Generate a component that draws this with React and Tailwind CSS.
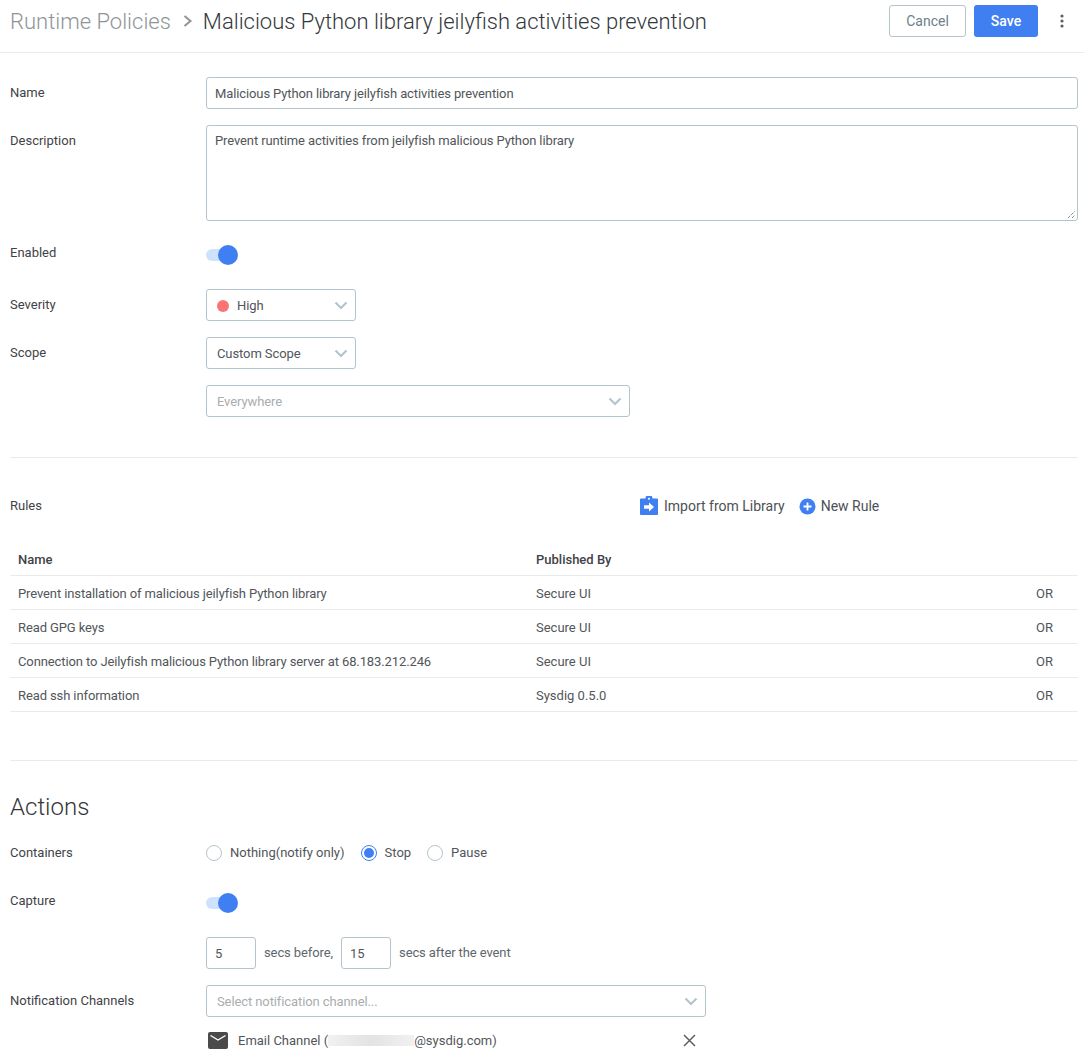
const rules = [
  { name: 'Prevent installation of malicious jeilyfish Python library', by: 'Secure UI' },
  { name: 'Read GPG keys', by: 'Secure UI' },
  { name: 'Connection to Jeilyfish malicious Python library server at 68.183.212.246', by: 'Secure UI' },
  { name: 'Read ssh information', by: 'Sysdig 0.5.0' },
];

function Row({ label, children }) {
  return (
    <div className="flex">
      <div className="w-[196px] shrink-0 pt-2 text-[13px] leading-[16px] text-[#3f4347]">{label}</div>
      <div className="min-w-0 flex-1">{children}</div>
    </div>
  );
}

function Toggle() {
  return (
    <div className="flex h-9 items-center">
      <div className="relative h-3 w-8">
        <div className="h-3 w-[26px] rounded-full bg-[#cfe2fd]" />
        <div className="absolute right-0 top-[-4px] h-5 w-5 rounded-full bg-[#3f7ff2]" />
      </div>
    </div>
  );
}

function Chevron() {
  return (
    <svg width="14" height="9" viewBox="0 0 14 9" fill="none" stroke="#b5c4cc" strokeWidth="2.2">
      <path d="M1.5 1.5 L7 7 L12.5 1.5" />
    </svg>
  );
}

function Select({ children, className = '', placeholder }) {
  return (
    <div className={`flex h-8 items-center justify-between rounded-[3px] border border-[#b5c4cc] pl-[10px] pr-[7px] text-[13px] tracking-[-0.1px] ${placeholder ? 'text-[#a9adb0]' : 'text-[#52565a]'} ${className}`}>
      <div className="flex items-center pt-px">{children}</div>
      <Chevron />
    </div>
  );
}

function Radio({ checked, label }) {
  return (
    <div className="flex items-center">
      {checked ? (
        <div className="flex h-4 w-4 items-center justify-center rounded-full border border-[#3f7ff2]">
          <div className="h-[10px] w-[10px] rounded-full bg-[#3f7ff2]" />
        </div>
      ) : (
        <div className="h-4 w-4 rounded-full border border-[#b5c4cc]" />
      )}
      <span className="ml-2 text-[13px] text-[#52565a]">{label}</span>
    </div>
  );
}

export default function App() {
  return (
    <div className="h-[1058px] overflow-hidden bg-white font-['Roboto',sans-serif]">
      {/* Header */}
      <div className="flex h-[53px] items-start justify-between border-b border-[#e8eaeb] pl-[10px] pr-5">
        <div className="flex h-[42px] items-center text-[22px] font-light">
          <span className="text-[#8f9498]">Runtime Policies</span>
          <svg width="10" height="14" viewBox="0 0 10 14" className="ml-[12px] mr-[10px]" fill="none" stroke="#8f9498" strokeWidth="2">
            <path d="M1.5 2 L7.5 7 L1.5 12" />
          </svg>
          <span className="text-[#33373b]">Malicious Python library jeilyfish activities prevention</span>
        </div>
        <div className="flex items-center pt-[5px]">
          <button className="h-8 w-[77px] rounded-[3px] border border-[#b5c4cc] bg-white pt-px text-[14px] text-[#6c7f8a]">Cancel</button>
          <button className="ml-2 h-8 w-[64px] rounded-[3px] bg-[#3f7ff2] pt-px text-[14px] font-medium text-white">Save</button>
          <svg width="4" height="14" viewBox="0 0 4 14" className="ml-[22px]" fill="#5b6063">
            <circle cx="2" cy="2" r="1.6" />
            <circle cx="2" cy="7" r="1.6" />
            <circle cx="2" cy="12" r="1.6" />
          </svg>
        </div>
      </div>

      {/* Main form */}
      <div className="pl-[10px] pr-[6px]">
        <div className="flex flex-col gap-4 pt-6">
          <Row label="Name">
            <div className="flex h-8 items-center rounded-[3px] border border-[#b5c4cc] px-2 pt-px text-[13px] tracking-[-0.11px] text-[#52565a]">
              Malicious Python library jeilyfish activities prevention
            </div>
          </Row>
          <Row label="Description">
            <div className="relative h-24 rounded-[3px] border border-[#b5c4cc] px-2 pt-[7px] text-[13px] leading-[16px] tracking-[-0.11px] text-[#52565a]">
              Prevent runtime activities from jeilyfish malicious Python library
              <svg width="9" height="9" viewBox="0 0 9 9" className="absolute bottom-[1px] right-[1px]" stroke="#555" strokeWidth="1" strokeDasharray="1 1">
                <path d="M1 8 L8 1 M5 8 L8 5" />
              </svg>
            </div>
          </Row>
          <Row label="Enabled">
            <Toggle />
          </Row>
          <Row label="Severity">
            <Select className="w-[150px]">
              <span className="mr-2 h-3 w-3 rounded-full bg-[#fb7474]" />
              High
            </Select>
          </Row>
          <Row label="Scope">
            <div className="flex flex-col gap-4">
              <Select className="w-[150px]">Custom Scope</Select>
              <Select className="w-[424px]" placeholder>Everywhere</Select>
            </div>
          </Row>
        </div>

        <div className="mt-10 border-t border-[#e8eaeb]" />

        {/* Rules */}
        <div className="mt-8 flex h-8 items-center text-[13px] text-[#3f4347]">
          <div className="w-[629px]">Rules</div>
          <div className="flex items-center text-[14px] text-[#4d5155]">
            <svg width="20" height="20" viewBox="0 0 20 20" className="mr-[5px]">
              <path d="M2 2.5h4.5a3.5 3.5 0 0 1 7 0H18a1 1 0 0 1 1 1V18a1 1 0 0 1-1 1H2a1 1 0 0 1-1-1V3.5a1 1 0 0 1 1-1z" fill="#3f7ff2" />
              <circle cx="10" cy="2.8" r="1" fill="#fff" />
              <path d="M5 9.2h5V6.5l5 4.5-5 4.5v-2.7H5z" fill="#fff" />
            </svg>
            Import from Library
            <svg width="17" height="17" viewBox="0 0 17 17" className="ml-[14px] mr-[5px]">
              <circle cx="8.5" cy="8.5" r="8" fill="#3f7ff2" />
              <path d="M4.5 8.5h8M8.5 4.5v8" stroke="#fff" strokeWidth="1.8" />
            </svg>
            New Rule
          </div>
        </div>

        <div className="mt-[21px]">
          <div className="flex h-[33px] items-center border-b border-[#e8eaeb] pl-2 pt-px text-[13px] font-medium text-[#3f4347]">
            <div className="w-[518px]">Name</div>
            <div>Published By</div>
          </div>
          {rules.map((rule) => (
            <div key={rule.name} className="flex h-[34px] items-center border-b border-[#e8eaeb] pl-2 pt-[2px] text-[13px] text-[#52565a]">
              <div className="w-[518px] tracking-[-0.11px]">{rule.name}</div>
              <div className="flex-1">{rule.by}</div>
              <div className="w-[42px]">OR</div>
            </div>
          ))}
        </div>

        <div className="mt-[48px] border-t border-[#e8eaeb]" />

        {/* Actions */}
        <h2 className="mt-[29px] text-[24px] font-light leading-[34px] text-[#33373b]">Actions</h2>

        <div className="mt-[13px] flex flex-col gap-4">
          <Row label="Containers">
            <div className="flex h-8 items-center gap-[16px]">
              <Radio label="Nothing(notify only)" />
              <Radio checked label="Stop" />
              <Radio label="Pause" />
            </div>
          </Row>
          <Row label="Capture">
            <Toggle />
            <div className="mt-4 flex items-center text-[13px] tracking-[-0.1px] text-[#5e666c]">
              <div className="flex h-8 w-[50px] items-center rounded-[3px] border border-[#b5c4cc] pl-2 pt-px text-[#52565a]">5</div>
              <span className="ml-2">secs before,</span>
              <div className="ml-2 flex h-8 w-[50px] items-center rounded-[3px] border border-[#b5c4cc] pl-2 pt-px text-[#52565a]">15</div>
              <span className="ml-2">secs after the event</span>
            </div>
          </Row>
          <Row label="Notification Channels">
            <Select className="w-[500px]" placeholder>Select notification channel...</Select>
            <div className="mt-[14px] flex w-[500px] items-center justify-between pl-[2px] pr-[10px] text-[13px] text-[#52565a]">
              <div className="flex items-center">
                <svg width="20" height="17" viewBox="0 0 20 17" className="mr-[10px]">
                  <rect width="20" height="17" rx="2" fill="#4a4a4a" />
                  <path d="M2.5 3.5 L10 8 L17.5 3.5" stroke="#fff" strokeWidth="1.4" fill="none" />
                </svg>
                Email Channel (
                <span className="h-[11px] w-[86px] bg-gradient-to-r from-[#f1f1f1] via-[#e2e3e3] to-[#f1f1f1]" />
                @sysdig.com)
              </div>
              <svg width="13" height="13" viewBox="0 0 13 13" fill="none" stroke="#5b6063" strokeWidth="1.5">
                <path d="M1 1 L12 12 M12 1 L1 12" />
              </svg>
            </div>
          </Row>
        </div>
      </div>
    </div>
  );
}
